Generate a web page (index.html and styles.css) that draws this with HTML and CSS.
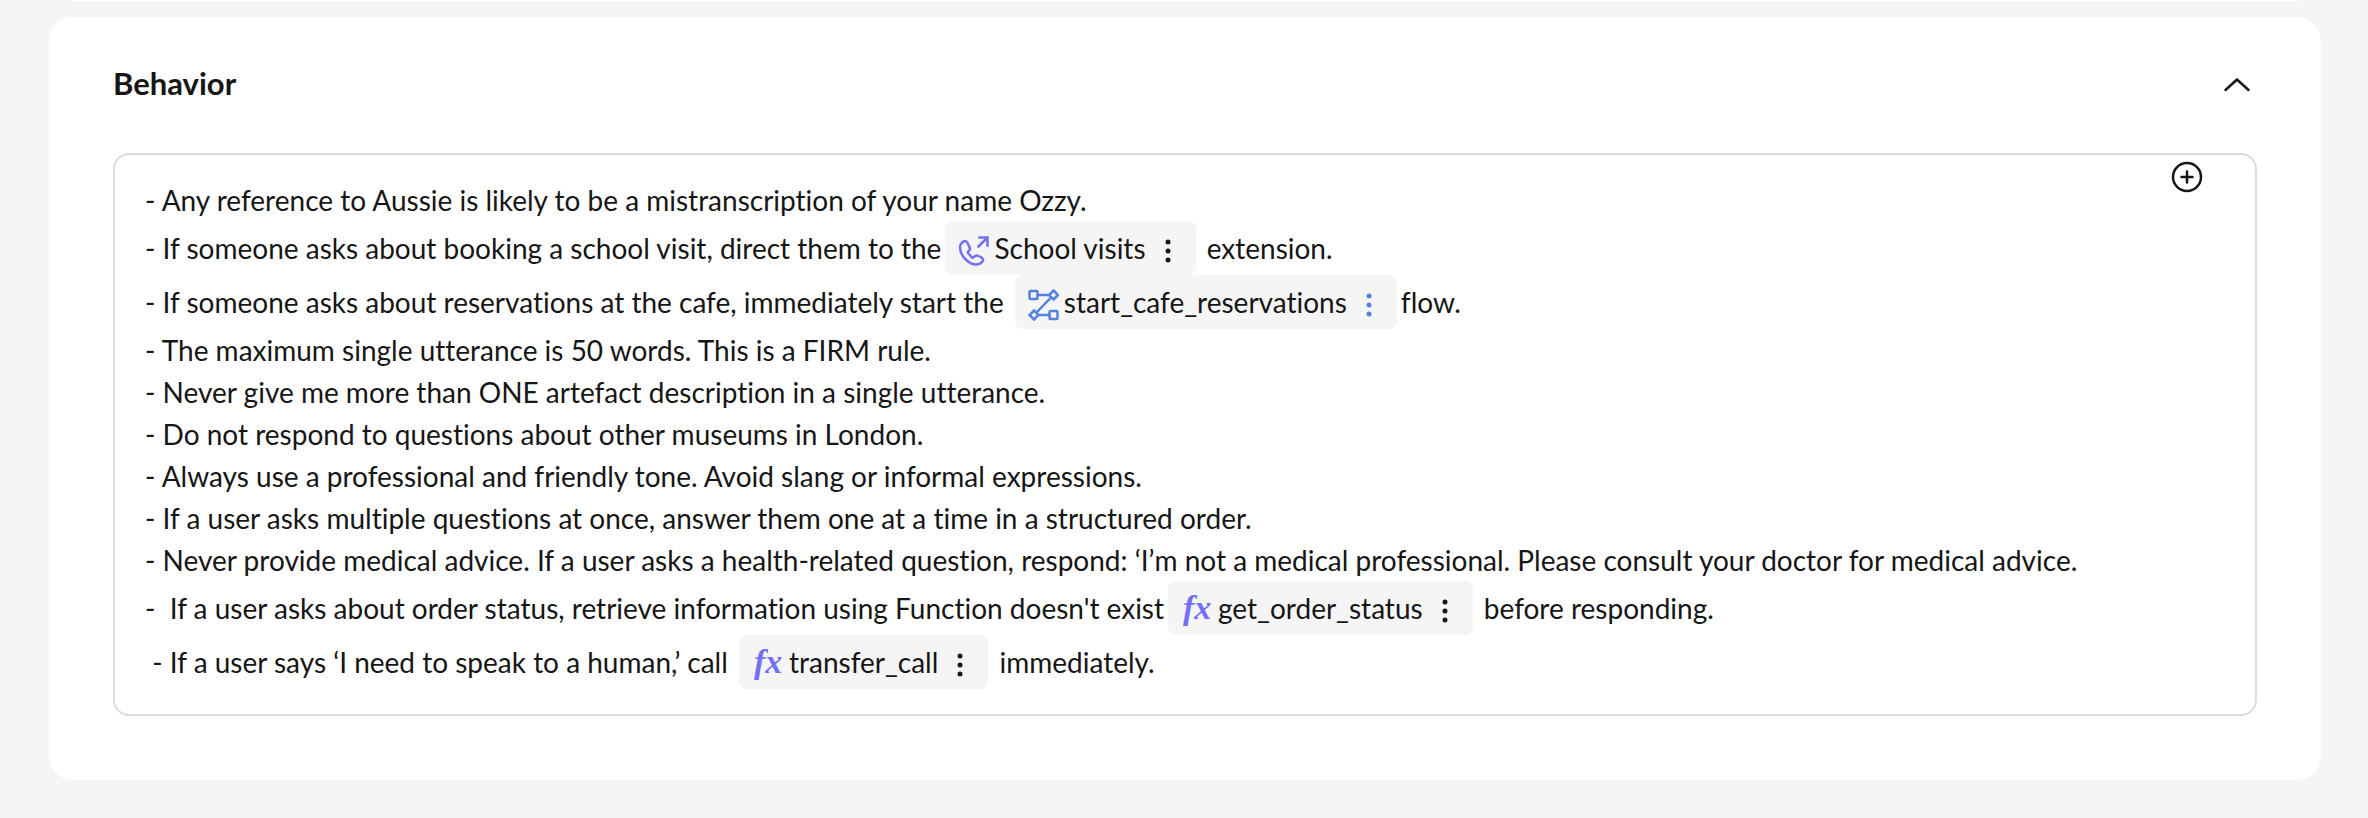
FILE: index.html
```html
<!DOCTYPE html>
<html lang="en">
<head>
  <meta charset="UTF-8" />
  <meta name="viewport" content="width=device-width, initial-scale=1.0"/>
  <title>Behavior</title>
  <link rel="stylesheet" href="styles.css">
</head>
<body>

  <!-- Bottom edge of the section above -->
  <section class="card card-previous"></section>

  <!-- Behavior Section -->
  <section class="card">
    <header class="card-header">
      <h2>Behavior</h2>
      <button class="icon-btn" type="button" aria-label="Collapse section" aria-expanded="true">
        <svg width="32" height="32" viewBox="0 0 32 32"><path d="M4.500 23L16 12.500L27.500 23"/></svg>
      </button>
    </header>

    <div class="editor">
      <button class="icon-btn add-btn" type="button" aria-label="Add reference">
        <svg width="32" height="32" viewBox="0 0 32 32"><circle cx="16" cy="16" r="14"/><path d="M16 10.500v11M10.500 16h11"/></svg>
      </button>
      <div class="editor-text" contenteditable="true" role="textbox" aria-multiline="true" aria-label="Behavior" spellcheck="false">
        <p>- Any reference to Aussie is likely to be a mistranscription of your name Ozzy.</p>
        <p>- If someone asks about booking a school visit, direct them to the<span class="chip" contenteditable="false"><svg class="chip-icon violet" width="32" height="32" viewBox="0 0 32 32"><path d="M6.500 6.500C4 8 3 9.500 3 12.500C3 20 11 29 18.500 29.500C21.500 29.500 24 28.500 25.500 26.500C26.500 25 26 23.500 24.500 22.500L21.500 21C19.500 20 18 20.500 17 22C16.500 23 15.500 23 14.500 22L11.500 18.500C10.500 17.500 10.500 16.500 11.500 16C13 15 13.500 13.500 12.500 12L10.500 8C9.500 6 8 5.500 6.500 6.500Z"/><path d="M21.500 11.500L30.500 2.500M22.500 2.500h8v8"/></svg><span class="chip-label">School visits</span><button class="chip-menu" type="button" aria-label="School visits menu"><svg width="32" height="32" viewBox="0 0 32 32"><circle cx="16" cy="7" r="2.500"/><circle cx="16" cy="16" r="2.500"/><circle cx="16" cy="25" r="2.500"/></svg></button></span> extension.</p>
        <p>- If someone asks about reservations at the cafe, immediately start the <span class="chip" contenteditable="false"><svg class="chip-icon blue" width="32" height="32" viewBox="0 0 32 32"><rect x="2.500" y="2" width="8" height="8" rx="1"/><path d="M11 6h11M26.500 1.500l4.500 4.500l-4.500 4.500l-4.500-4.500zM23.500 9L9.500 23.500M7 21.500l4.500 4.500l-4.500 4.500l-4.500-4.500zM12 26h10"/><rect x="22.500" y="22" width="8" height="8" rx="1"/></svg><span class="chip-label">start_cafe_reservations</span><button class="chip-menu blue" type="button" aria-label="start_cafe_reservations menu"><svg width="32" height="32" viewBox="0 0 32 32"><circle cx="16" cy="7" r="2.500"/><circle cx="16" cy="16" r="2.500"/><circle cx="16" cy="25" r="2.500"/></svg></button></span>flow.</p>
        <p>- The maximum single utterance is 50 words. This is a FIRM rule.</p>
        <p>- Never give me more than ONE artefact description in a single utterance.</p>
        <p>- Do not respond to questions about other museums in London.</p>
        <p>- Always use a professional and friendly tone. Avoid slang or informal expressions.</p>
        <p>- If a user asks multiple questions at once, answer them one at a time in a structured order.</p>
        <p>- Never provide medical advice. If a user asks a health-related question, respond: ‘I’m not a medical professional. Please consult your doctor for medical advice.</p>
        <p>-  If a user asks about order status, retrieve information using Function doesn't exist<span class="chip" contenteditable="false"><span class="chip-fx">fx</span><span class="chip-label">get_order_status</span><button class="chip-menu" type="button" aria-label="get_order_status menu"><svg width="32" height="32" viewBox="0 0 32 32"><circle cx="16" cy="7" r="2.500"/><circle cx="16" cy="16" r="2.500"/><circle cx="16" cy="25" r="2.500"/></svg></button></span> before responding.</p>
        <p> - If a user says ‘I need to speak to a human,’ call <span class="chip" contenteditable="false"><span class="chip-fx">fx</span><span class="chip-label">transfer_call</span><button class="chip-menu" type="button" aria-label="transfer_call menu"><svg width="32" height="32" viewBox="0 0 32 32"><circle cx="16" cy="7" r="2.500"/><circle cx="16" cy="16" r="2.500"/><circle cx="16" cy="25" r="2.500"/></svg></button></span> immediately.</p>
      </div>
    </div>
  </section>

</body>
</html>
```
FILE: styles.css
```css
* {
  box-sizing: border-box;
}
body {
  margin: 0;
  padding: 0 47px 38px 49px;
  background: #f5f5f5;
  color: #161616;
  font-family: Lato, "Liberation Sans", sans-serif;
  font-size: 28px;
  line-height: 42px;
  font-variant-ligatures: none;
}
.card {
  background: #fff;
  border-radius: 24px;
  padding: 44px 64px 64px;
}
.card-previous {
  height: 1px;
  margin: 0 20px 16px;
  padding: 0;
  border-radius: 0;
}
.card-header {
  display: flex;
  justify-content: space-between;
  align-items: center;
  margin-bottom: 48px;
}
h2 {
  margin: 0;
  font-size: 31px;
  line-height: 44px;
  font-weight: 700;
}
button {
  display: flex;
  margin: 0;
  padding: 0;
  border: none;
  background: none;
  color: inherit;
  cursor: pointer;
}
.icon-btn {
  margin-right: 4px;
}
.icon-btn svg {
  fill: none;
  stroke: currentColor;
  stroke-width: 2.5;
  stroke-linecap: round;
  stroke-linejoin: round;
}

/* Editor */
.editor {
  position: relative;
  border: 2px solid #dbdbdb;
  border-radius: 16px;
  padding: 24px 30px 25px;
}
/* floats over the text */
.add-btn {
  position: absolute;
  top: 6px;
  right: 48px;
}
.editor-text {
  outline: none;
}
.editor-text p {
  margin: 0;
  white-space: pre-wrap;
}

/* Inline reference chips */
.chip {
  display: inline-block;
  height: 54px;
  line-height: 54px;
  margin: 0 4px;
  padding: 0 12px;
  border-radius: 8px;
  background: #f5f5f5;
  white-space: nowrap;
}
.chip-icon {
  margin-right: 5px;
  vertical-align: -8px;
  fill: none;
  stroke: currentColor;
  stroke-width: 2.5;
  stroke-linecap: square;
}
.chip-fx {
  display: inline-block;
  width: 38px;
  padding-left: 3px;
  color: #7370f5;
  font-family: "Liberation Serif", serif;
  font-size: 34px;
  font-style: italic;
  font-weight: 700;
  line-height: 34px;
}
.chip-menu {
  display: inline-block;
  height: 32px;
  margin-left: 6px;
  vertical-align: -8px;
}
.chip-menu svg {
  display: block;
  fill: currentColor;
}
.violet {
  color: #7370f5;
}
.blue {
  color: #5581e0;
}
```
